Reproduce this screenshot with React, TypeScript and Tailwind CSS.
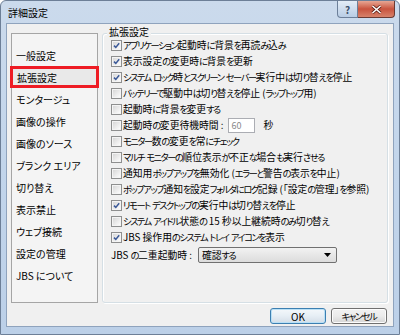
import React from "react";

const font = {
  fontFamily: '"Noto Sans CJK JP", "Noto Sans", sans-serif',
  fontFeatureSettings: '"palt"',
} as React.CSSProperties;

function J({ t }: { t: string }) {
  const parts = t.split(/([\u3041-\u30ff]+)/);
  return (
    <span className="whitespace-pre">
      {parts.map((p, i) =>
        /^[\u3041-\u30ff]+$/.test(p) ? (
          <span key={i} className="text-[9.2px] tracking-[-1.4px]">
            {p}
          </span>
        ) : (
          <span key={i}>{p}</span>
        )
      )}
    </span>
  );
}

function Check({ checked }: { checked?: boolean }) {
  return (
    <div className="w-[11px] h-[11px] shrink-0 border border-[#8e8f8f] bg-[#f4f4f4] p-[1px]">
      <div className="w-full h-full bg-gradient-to-br from-[#d8d8d8] to-[#fbfbfb] relative">
        {checked && (
          <svg viewBox="0 0 7 7" className="absolute inset-0 w-full h-full">
            <path d="M1 3.6 L2.8 5.4 L6.2 1.2" fill="none" stroke="#3b5998" strokeWidth="1.5" />
          </svg>
        )}
      </div>
    </div>
  );
}

function Row({ checked, children }: { checked?: boolean; children: React.ReactNode }) {
  return (
    <div className="h-[16px] flex items-center gap-[1px] text-[9.8px] leading-[14px] text-black whitespace-nowrap">
      <Check checked={checked} />
      <div className="flex items-center">{children}</div>
    </div>
  );
}

const items = [
  "一般設定",
  "拡張設定",
  "モンタージュ",
  "画像の操作",
  "画像のソース",
  "ブランク エリア",
  "切り替え",
  "表示禁止",
  "ウェブ接続",
  "設定の管理",
  "JBS について",
];

export default function App() {
  return (
    <div className="w-[400px] h-[335px] overflow-hidden bg-white" style={font}>
      <div className="w-[400px] h-[335px] flex flex-col border border-[#6d7f97] rounded-t-[6px] bg-gradient-to-b from-[#cbdaec] via-[#c2d5eb] to-[#bcd0e8]">
        {/* title bar */}
        <div className="h-[22px] shrink-0 flex items-start justify-between">
          <div className="pl-[7px] pt-[4px] text-[10px] text-black">詳細設定</div>
          <div className="flex pr-[4px]">
            <div className="w-[21px] h-[17px] border border-[#6c7f99] border-t-0 rounded-bl-[4px] bg-gradient-to-b from-[#e3ecf6] to-[#b9cde5] flex items-center justify-center text-[10px] font-bold text-[#3c4f6a]">
              ?
            </div>
            <div className="w-[37px] h-[17px] border border-[#6a3a33] border-t-0 border-l-0 rounded-br-[4px] bg-gradient-to-b from-[#e6a694] via-[#c8533e] to-[#d7816a] flex items-center justify-center">
              <svg width="11" height="9" viewBox="0 0 11 9">
                <path d="M1.5 1 L9.5 8 M9.5 1 L1.5 8" stroke="#5a1d14" strokeWidth="3" />
                <path d="M1.5 1 L9.5 8 M9.5 1 L1.5 8" stroke="#ffffff" strokeWidth="1.6" />
              </svg>
            </div>
          </div>
        </div>
        {/* client */}
        <div className="mx-[5px] h-[304px] shrink-0 border border-[#8fa3bd] bg-[#f0f0f0] flex flex-col">
          <div className="flex pt-[9px] pl-[4px] pr-[5px] gap-[4px] h-[279px]">
            {/* list */}
            <div className="w-[87px] shrink-0 h-[270px] border border-[#a5a5a5] bg-[#f4f4f4] flex flex-col pt-[10px] relative">
              {items.map((t, i) => (
                <div
                  key={t}
                  className={
                    "h-[22px] flex items-center pl-[4px] text-[10px] text-black whitespace-pre " +
                    (i === 1 ? "mx-[-2px] border-[3px] border-[#ee1c24] pl-[3px] bg-[#e9e9e9]" : "")
                  }
                >
                  {t}
                </div>
              ))}
            </div>
            {/* group box */}
            <div className="flex-1 min-w-0 h-[270px] border border-[#d5dfe5] rounded-[3px] relative shadow-[inset_1px_1px_0_#ffffff,1px_1px_0_#ffffff] pl-[8px] pt-[3px]">
              <div className="absolute left-[4px] top-[-8px] px-[2px] bg-[#f0f0f0] text-[10px] text-black leading-[11px]">
                拡張設定
              </div>
              <Row checked><J t="アプリケーション起動時に背景を再読み込み" /></Row>
              <Row checked><J t="表示設定の変更時に背景を更新" /></Row>
              <Row checked><J t="システム ロック時とスクリーン セーバー実行中は切り替えを停止" /></Row>
              <Row><J t="バッテリーで駆動中は切り替えを停止 (ラップトップ用)" /></Row>
              <Row><J t="起動時に背景を変更する" /></Row>
              <Row>
                <J t="起動時の変更待機時間 :" />
                <span className="ml-[4px] w-[27px] h-[15px] border border-[#abadb3] bg-white text-[#8a8a8a] pl-[3px] leading-[13px] text-[9px]">
                  60
                </span>
                <span className="ml-[9px]">秒</span>
              </Row>
              <Row><J t="モニター数の変更を常にチェック" /></Row>
              <Row><J t="マルチ モニターの順位表示が不正な場合も実行させる" /></Row>
              <Row><J t="通知用ポップアップを無効化 (エラーと警告の表示を中止)" /></Row>
              <Row><J t="ポップアップ通知を設定フォルダにログ記録 (「設定の管理」を参照)" /></Row>
              <Row checked><J t="リモート デスクトップの実行中は切り替えを停止" /></Row>
              <Row><J t="システム アイドル状態の 15 秒以上継続時のみ切り替え" /></Row>
              <Row checked><J t="JBS 操作用のシステム トレイ アイコンを表示" /></Row>
              <div className="h-[18px] mt-[1px] flex items-center text-[9.8px] text-black whitespace-nowrap">
                <span className="w-[87px]"><J t="JBS の二重起動時 :" /></span>
                <div className="w-[139px] h-[16px] border border-[#707070] rounded-[2px] bg-gradient-to-b from-[#f2f2f2] to-[#dcdcdc] flex items-center justify-between pl-[3px] pr-[5px]">
                  <J t="確認する" />
                  <svg width="7" height="4" viewBox="0 0 7 4">
                    <path d="M0 0 L7 0 L3.5 4 Z" fill="#000" />
                  </svg>
                </div>
              </div>
            </div>
          </div>
          {/* buttons */}
          <div className="flex justify-end gap-[5px] pr-[6px] pt-[5px]">
            <div className="w-[56px] h-[16px] border border-[#3c7fb1] rounded-[3px] bg-gradient-to-b from-[#f4f8fb] via-[#e6eef5] to-[#d3dde7] shadow-[inset_0_0_0_1px_#b9e0f6] flex items-center justify-center text-[10px] text-black">
              OK
            </div>
            <div className="w-[56px] h-[16px] border border-[#707070] rounded-[3px] bg-gradient-to-b from-[#f2f2f2] via-[#ebebeb] to-[#d5d5d5] shadow-[inset_0_0_0_1px_#fcfcfc] flex items-center justify-center text-[10px] text-black">
              <J t="キャンセル" />
            </div>
          </div>
        </div>
      </div>
    </div>
  );
}
